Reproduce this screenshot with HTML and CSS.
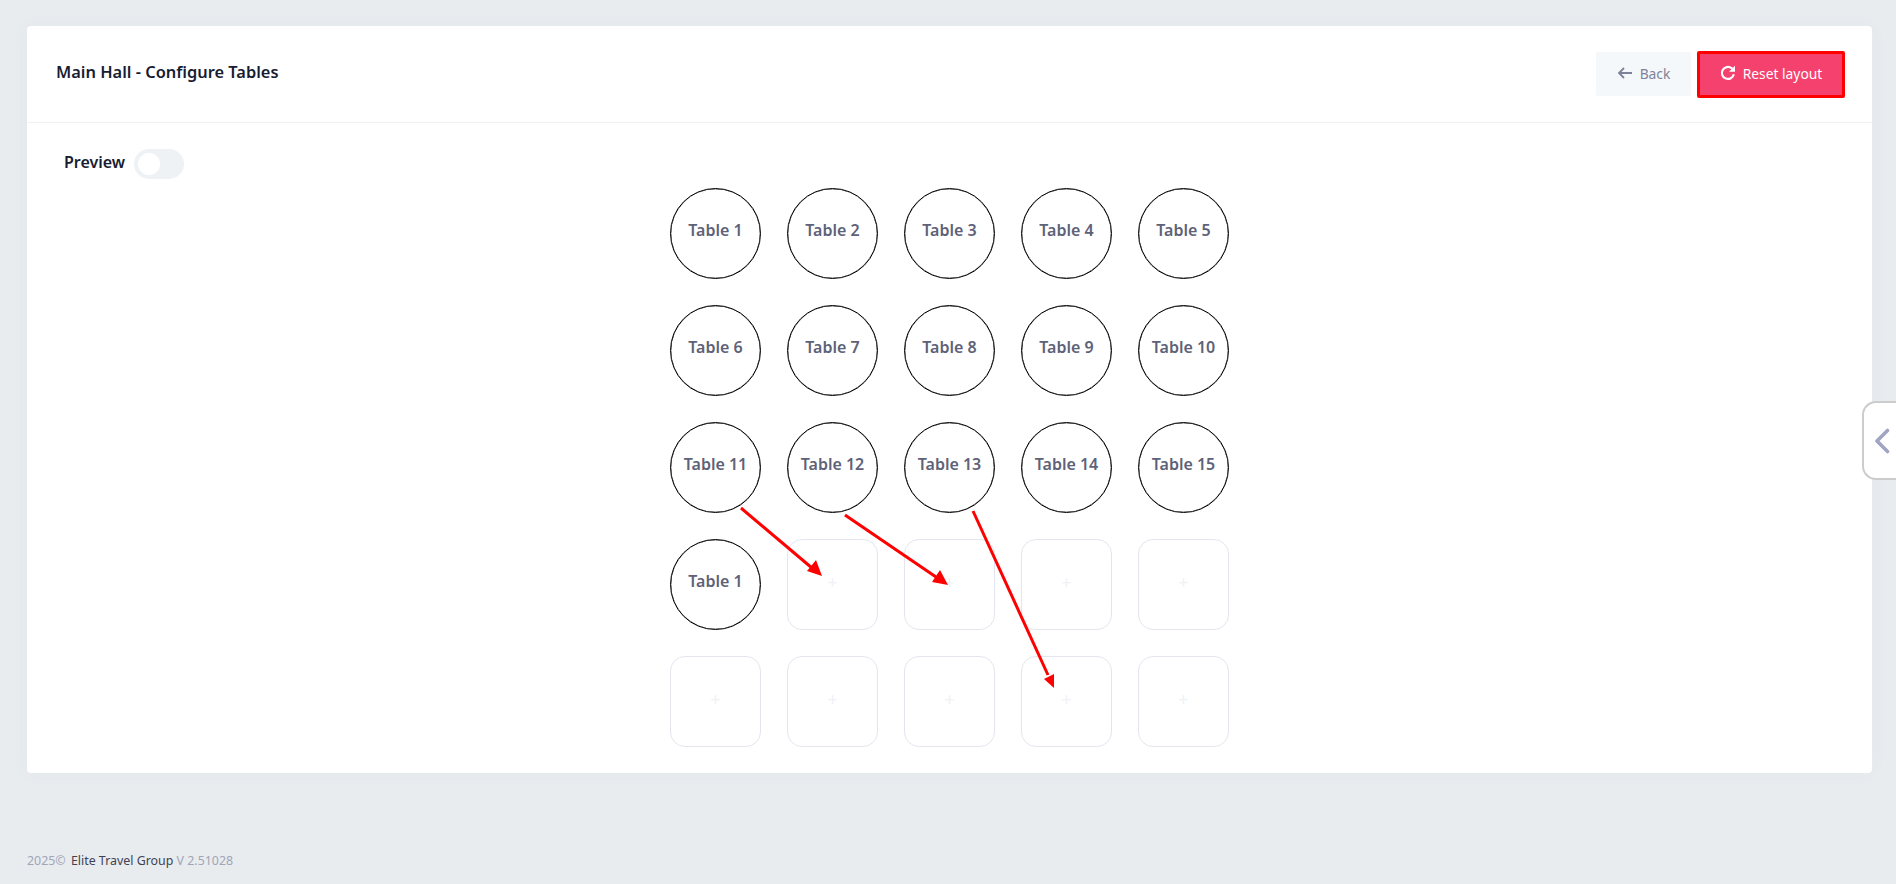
FILE: index.html
```html
<!DOCTYPE html>
<html>
<head>
  <title>Main Hall - Configure Tables</title>
  <link rel="stylesheet" href="styles.css">
</head>
<body>
  <div class="card">
    <div class="card-header">
      <h3 class="card-title">Main Hall - Configure Tables</h3>
      <div class="card-actions">
        <a class="btn btn-back">
          <svg class="btn-icon" viewBox="0 0 16 16" fill="none" stroke="currentColor" stroke-width="1.8"><path d="M15 8H2M7 3L2 8l5 5"/></svg>
          Back
        </a>
        <a class="btn btn-reset">
          <svg class="btn-icon" viewBox="0 0 16 16" fill="none" stroke="currentColor" stroke-width="2.2"><path d="M13.8 9.2A6 6 0 1 1 11.6 3.2L13.6 5"/><path d="M15 .8v6H9" stroke="none" fill="currentColor"/></svg>
          Reset layout
        </a>
      </div>
    </div>
    <div class="card-body">
      <div class="preview-row">
        <label class="preview-label">Preview</label>
        <span class="switch"><span class="switch-knob"></span></span>
      </div>
      <div class="table-grid">
        <div class="cell table">Table 1</div>
        <div class="cell table">Table 2</div>
        <div class="cell table">Table 3</div>
        <div class="cell table">Table 4</div>
        <div class="cell table">Table 5</div>
        <div class="cell table">Table 6</div>
        <div class="cell table">Table 7</div>
        <div class="cell table">Table 8</div>
        <div class="cell table">Table 9</div>
        <div class="cell table">Table 10</div>
        <div class="cell table">Table 11</div>
        <div class="cell table">Table 12</div>
        <div class="cell table">Table 13</div>
        <div class="cell table">Table 14</div>
        <div class="cell table">Table 15</div>
        <div class="cell table">Table 1</div>
        <div class="cell empty">+</div>
        <div class="cell empty">+</div>
        <div class="cell empty">+</div>
        <div class="cell empty">+</div>
        <div class="cell empty">+</div>
        <div class="cell empty">+</div>
        <div class="cell empty">+</div>
        <div class="cell empty">+</div>
        <div class="cell empty">+</div>
      </div>
    </div>
  </div>

  <div class="footer">
    <span class="muted">2025&copy;</span>
    <a class="footer-link">Elite Travel Group</a>
    <span class="muted">V 2.51028</span>
  </div>

  <div class="side-tab">
    <svg viewBox="0 0 16 26" fill="none" stroke="#a1a5c4" stroke-width="3.6" stroke-linecap="round" stroke-linejoin="round"><path d="M13.5 2.5L3 13l10.5 10.5"/></svg>
  </div>

  <!-- annotation arrows drawn on top of the screenshot -->
  <svg class="arrows" width="1896" height="884" viewBox="0 0 1896 884">
    <g stroke="#ff0000" stroke-width="3" fill="#ff0000">
      <path d="M741 508L812 568"/>
      <path d="M822 576L807 571L816 560Z" stroke="none"/>
      <path d="M845 515L936 577"/>
      <path d="M948 585L932 582L940 570Z" stroke="none"/>
      <path d="M973 511L1048 675"/>
      <path d="M1054 688L1044 679L1054 674Z" stroke="none"/>
    </g>
  </svg>
</body>
</html>
```

FILE: styles.css
```css
html, body {
  height: 100%;
}

body {
  margin: 0;
  padding: 26px 24px 0 27px;
  box-sizing: border-box;
  background-color: #e8ecef;
  font-family: 'Noto Sans', Roboto, sans-serif;
  overflow: hidden;
}

.card {
  background-color: #fff;
  border-radius: 4px;
  box-shadow: 0 0 20px rgba(76, 87, 125, 0.03);
}

.card-header {
  display: flex;
  justify-content: space-between;
  align-items: center;
  height: 96px;
  padding: 0 27px 0 29px;
  border-bottom: 1px solid #eff2f5;
}

.card-title {
  margin: 0 0 5px;
  font-size: 16.4px;
  font-weight: 600;
  color: #181c32;
}

.card-actions {
  display: flex;
  align-items: center;
  gap: 6px;
}

.btn {
  display: flex;
  align-items: center;
  justify-content: center;
  gap: 7px;
  box-sizing: border-box;
  padding-bottom: 2px;
  border-radius: 2px;
  font-size: 13.8px;
  cursor: pointer;
}

.btn-icon {
  width: 16px;
  height: 16px;
}

.btn-back {
  width: 95px;
  height: 44px;
  background-color: #f5f8fa;
  color: #7e8299;
}

.btn-reset {
  width: 148px;
  height: 47px;
  background-color: #f5416e;
  border: 3px solid #ff0000;
  color: #fff;
}

.card-body {
  padding: 26px 0 26px 37px;
}

.preview-row {
  display: flex;
  align-items: center;
  gap: 10px;
  height: 30px;
}

.preview-label {
  width: 60px;
  margin-bottom: 5px;
  font-size: 16px;
  font-weight: 600;
  color: #181c32;
}

.switch {
  display: block;
  width: 50px;
  height: 30px;
  border-radius: 15px;
  background-color: #eff2f5;
}

.switch-knob {
  display: block;
  width: 22px;
  height: 22px;
  margin: 4px;
  border-radius: 50%;
  background-color: #fff;
}

.table-grid {
  display: grid;
  grid-template-columns: repeat(5, 91px);
  gap: 26px;
  justify-content: center;
  margin: 9px 0 0 -37px;
}

.cell {
  display: flex;
  align-items: center;
  justify-content: center;
  box-sizing: border-box;
  width: 91px;
  height: 91px;
  padding-bottom: 8px;
}

.table {
  border: 1px solid #000;
  border-radius: 50%;
  box-shadow: inset 0 0 0 0.2px #000;
  font-size: 16px;
  font-weight: 600;
  color: #5e6278;
}

.empty {
  border: 1px solid #e4e6ef;
  border-radius: 15px;
  padding-bottom: 6px;
  font-size: 18px;
  color: #eff2f5;
}

.footer {
  position: absolute;
  left: 27px;
  bottom: 15px;
  font-size: 12.4px;
}

.muted {
  color: #a1a5b7;
}

.footer-link {
  margin-left: 2px;
  color: #3f4254;
}

.side-tab {
  position: absolute;
  top: 401px;
  right: 0;
  display: flex;
  align-items: center;
  box-sizing: border-box;
  width: 34px;
  height: 79px;
  padding-left: 10px;
  background-color: #fff;
  border: 2px solid #ccc;
  border-right: none;
  border-radius: 14px 0 0 14px;
}

.side-tab svg {
  width: 16px;
  height: 26px;
}

.arrows {
  position: absolute;
  top: 0;
  left: 0;
  pointer-events: none;
}
```
